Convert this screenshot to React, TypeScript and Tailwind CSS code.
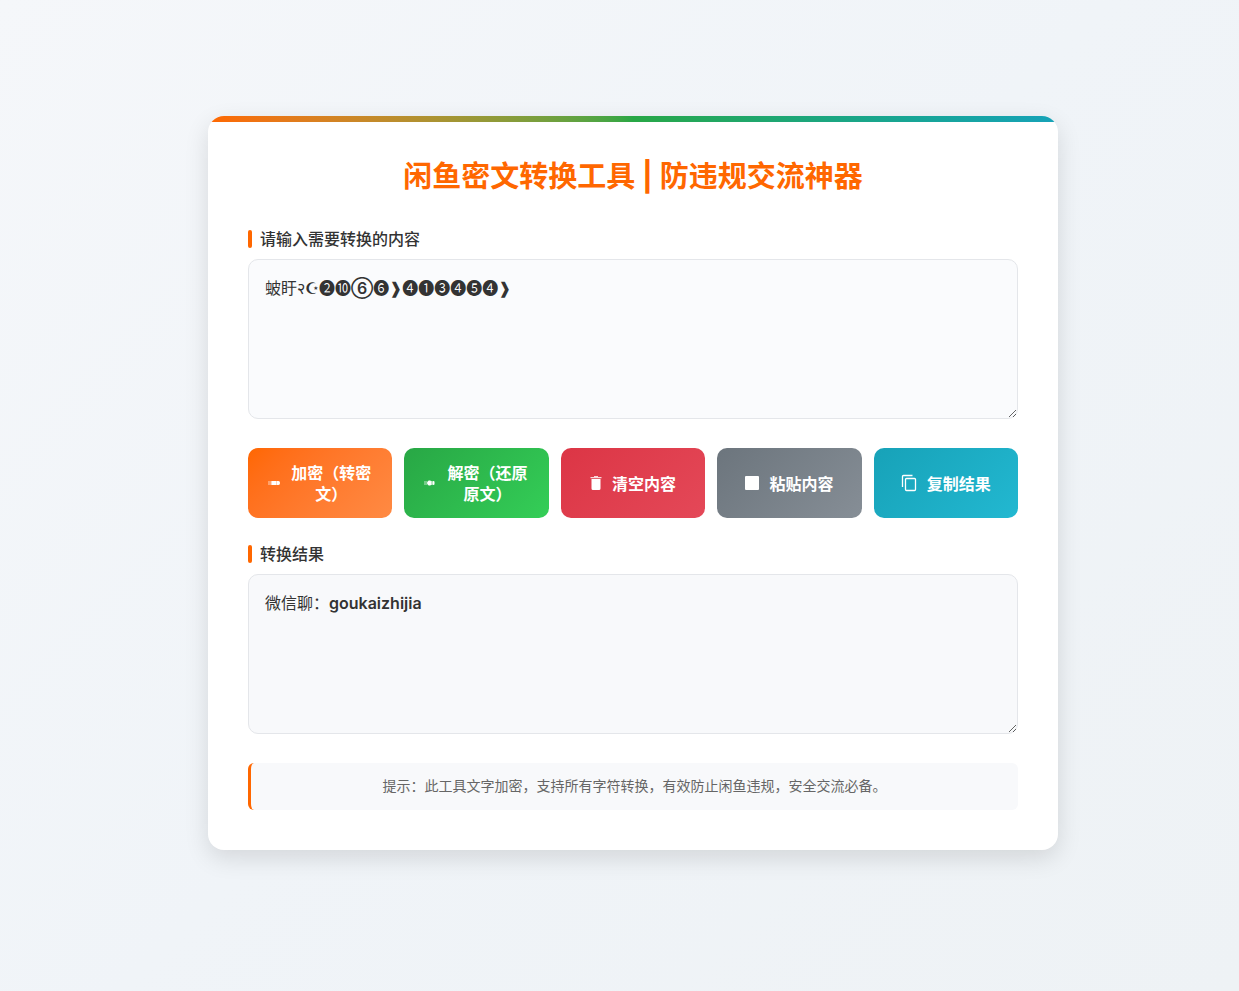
import { useState, type ReactNode } from "react";

const gradients = {
  orange: "from-[#ff6700] to-[#ff8a43]",
  green: "from-[#28a745] to-[#34ce57]",
  red: "from-[#dc3545] to-[#e44858]",
  gray: "from-[#6c757d] to-[#868e96]",
  teal: "from-[#17a2b8] to-[#22b8d1]",
};

function ArrowIcon({ round = false }: { round?: boolean }) {
  return (
    <svg viewBox="0 0 12 6" className="h-1.5 w-3 shrink-0" fill="#fff" aria-hidden="true">
      <rect x="0" y="1" width="3" height="4" opacity=".35" />
      {round ? (
        <>
          <rect x="3" y="1" width="4" height="4" rx="2" />
          <rect x="4" y="0.5" width="3" height="5" rx="1" />
          <rect x="7" y="1" width="1.5" height="4" opacity=".7" />
          <rect x="8.5" y="1" width="2" height="4" rx="1" />
        </>
      ) : (
        <>
          <rect x="3" y="1" width="1" height="4" opacity=".7" />
          <rect x="4" y="1" width="4" height="4" />
          <rect x="8" y="1" width="1" height="4" opacity=".7" />
          <path d="M9 1h1.5a1.5 2 0 0 1 0 4H9z" />
        </>
      )}
    </svg>
  );
}

function TrashIcon() {
  return (
    <svg viewBox="0 0 12 14" className="h-3.5 w-3 shrink-0" fill="#fff" aria-hidden="true">
      <path d="M4 0h4v1h3.5v1.2H.5V1H4z" opacity=".8" />
      <path d="M1.5 3h9v9.5a1.5 1.5 0 0 1-1.5 1.5H3a1.5 1.5 0 0 1-1.5-1.5z" />
    </svg>
  );
}

function PasteIcon() {
  return (
    <svg viewBox="0 0 14 14" className="h-3.5 w-3.5 shrink-0" aria-hidden="true">
      <rect width="14" height="14" rx="1" fill="#fff" />
    </svg>
  );
}

function CopyIcon() {
  return (
    <svg
      viewBox="0 0 16 18"
      className="h-[18px] w-4 shrink-0"
      fill="none"
      stroke="#fff"
      strokeWidth="1.3"
      aria-hidden="true"
    >
      <path d="M1.5 13V2.5a1 1 0 0 1 1-1H11.5" />
      <rect x="4.5" y="4.5" width="10" height="12" rx="1" />
    </svg>
  );
}

type ActionProps = {
  tone: string;
  icon: ReactNode;
  children: ReactNode;
  onClick?: () => void;
};

function Action({ tone, icon, children, onClick }: ActionProps) {
  return (
    <button
      type="button"
      onClick={onClick}
      className={`flex min-h-[70px] items-center justify-center gap-2.5 rounded-[10px] bg-linear-135 px-5 py-3 text-base leading-[21px] font-bold text-white ${tone}`}
    >
      {icon}
      <span className="pt-0.5">{children}</span>
    </button>
  );
}

const labelClass =
  "mb-2.5 flex items-center gap-2 text-base leading-5 font-medium text-[#333] before:h-[18px] before:w-1 before:rounded-sm before:bg-[#ff6700]";
const areaClass =
  "block h-40 w-full resize-y rounded-[10px] border border-[#e4e6ea] p-4 font-['Inter_SemiBold','Inter','Noto_Sans_CJK_SC',sans-serif] text-base leading-6 text-[#333] outline-none";

export default function App() {
  const [source, setSource] = useState("蚾盱२☪❷❿⑥❻❱❹❶❸❹❺❹❱");
  const [result, setResult] = useState("微信聊：goukaizhijia");

  return (
    <div className="flex min-h-screen items-center justify-center bg-linear-135 from-[#f5f7fa] via-[#f0f4f8] to-[#eef2f5] pb-[25px] pl-[27px] font-['Inter','Noto_Sans_CJK_SC',sans-serif]">
      <main className="relative w-full max-w-[850px] overflow-hidden rounded-2xl bg-white p-10 shadow-[0_8px_24px_rgba(0,0,0,0.12)] before:absolute before:inset-x-0 before:top-0 before:h-1.5 before:bg-linear-to-r before:from-[#ff6700] before:via-[#28a745] before:to-[#17a2b8]">
        <h1 className="mb-8 text-center text-[29px] leading-[41px] font-bold text-[#ff6700]">
          闲鱼密文转换工具 | 防违规交流神器
        </h1>
        <label htmlFor="source" className={labelClass}>
          请输入需要转换的内容
        </label>
        <textarea
          id="source"
          value={source}
          onChange={(e) => setSource(e.target.value)}
          className={`${areaClass} bg-[#fafbfd]`}
        />
        <div className="mt-[29px] mb-[26px] grid grid-cols-5 gap-3">
          <Action tone={gradients.orange} icon={<ArrowIcon />}>
            加密（转密文）
          </Action>
          <Action tone={gradients.green} icon={<ArrowIcon round />}>
            解密（还原原文）
          </Action>
          <Action
            tone={gradients.red}
            icon={<TrashIcon />}
            onClick={() => {
              setSource("");
              setResult("");
            }}
          >
            清空内容
          </Action>
          <Action tone={gradients.gray} icon={<PasteIcon />}>
            粘贴内容
          </Action>
          <Action tone={gradients.teal} icon={<CopyIcon />}>
            复制结果
          </Action>
        </div>
        <label htmlFor="result" className={labelClass}>
          转换结果
        </label>
        <textarea id="result" readOnly value={result} className={`${areaClass} bg-[#f8f9fb]`} />
        <p className="mt-[29px] rounded-md border-l-3 border-[#ff6700] bg-[#f8f9fb] px-3 pt-[11px] pb-[13px] text-center text-sm leading-[23px] text-[#666]">
          提示：此工具文字加密，支持所有字符转换，有效防止闲鱼违规，安全交流必备。
        </p>
      </main>
    </div>
  );
}
